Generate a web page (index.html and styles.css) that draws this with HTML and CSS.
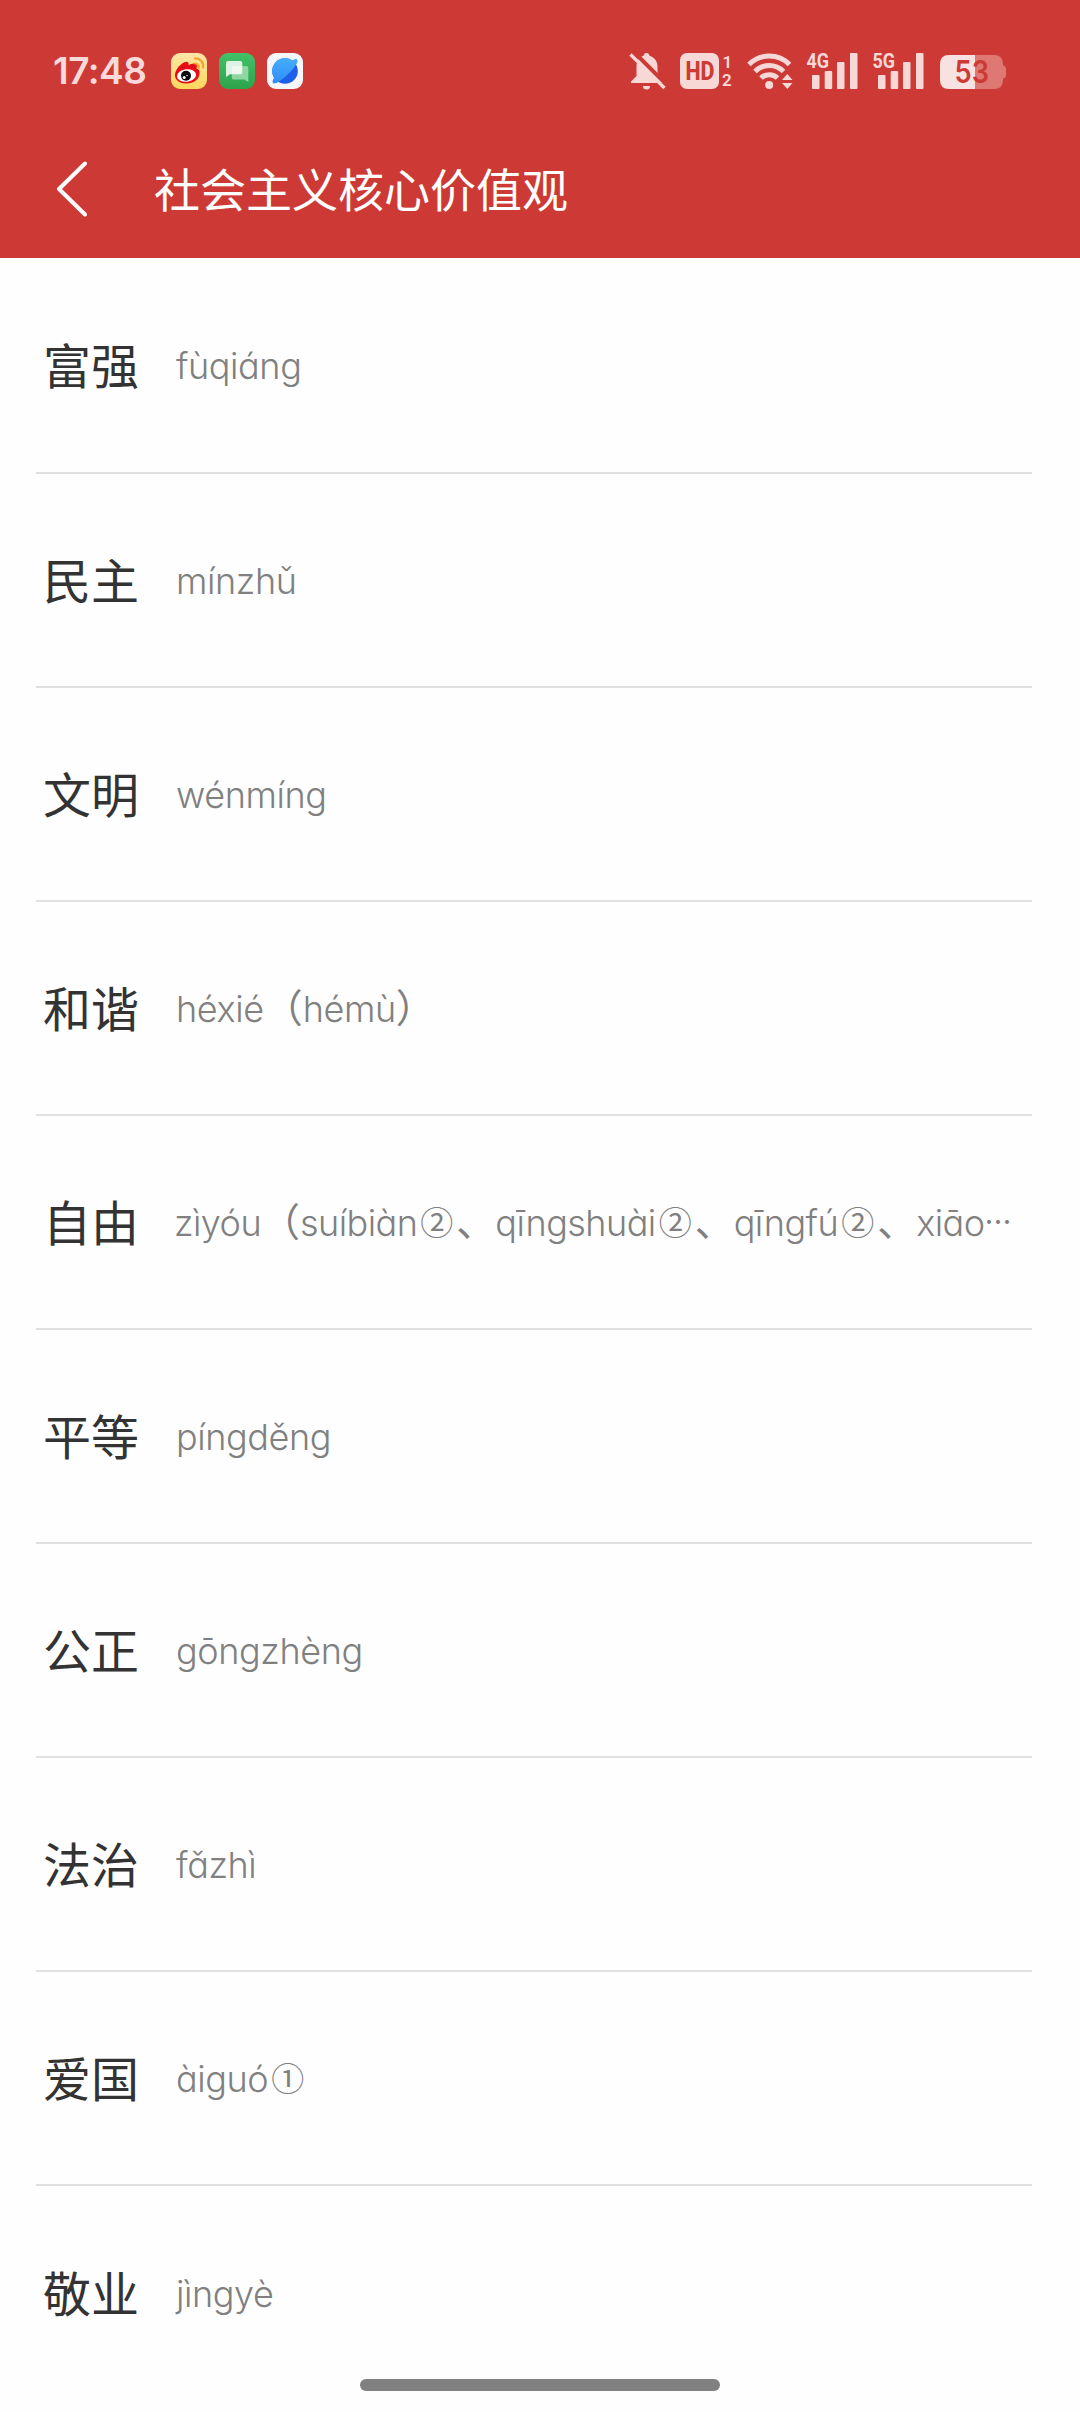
FILE: index.html
```html
<!DOCTYPE html>
<html lang="zh-CN">
  <head>
    <meta charset="UTF-8" />
    <meta name="viewport" content="width=device-width, initial-scale=1.0" />
    <title>社会主义核心价值观</title>
    <link rel="stylesheet" href="styles.css">
  </head>
  <body>
    <header class="header">
      <div class="status-bar">
        <span class="clock">17:48</span>
        <div class="apps">
          <svg class="app" viewBox="0 0 36 36">
            <defs>
              <linearGradient id="yellow" x1="0" y1="0" x2="0" y2="1">
                <stop offset="0" stop-color="#fde6a8" />
                <stop offset="1" stop-color="#fed75c" />
              </linearGradient>
            </defs>
            <rect width="36" height="36" rx="9" fill="url(#yellow)" />
            <path d="M4 23C3.500 18 8 12 13 9.500C16 8 18 9 17.500 12C20 10.500 24 9.500 25.500 11.500C26.500 13 25.500 14.500 25.500 15.500C28 16 29 18 28.500 21C28 27 21 31 15 30.500C9 30.500 4.500 27.500 4 23Z" fill="#e60d17" />
            <ellipse cx="15.500" cy="22.500" rx="9.600" ry="6.200" fill="#fff" transform="rotate(-8 15.500 22.500)" />
            <circle cx="15" cy="22.800" r="5" fill="#0b0b0b" />
            <circle cx="13.200" cy="24.400" r="1.500" fill="#fff" />
            <circle cx="16" cy="22.500" r="0.700" fill="#fff" />
            <path d="M24 5.500C29 5 33 9.500 32 14.500M24 10.500C26.500 10.500 28.200 12.500 27.600 15" fill="none" stroke="#f5a32b" stroke-width="2.200" stroke-linecap="round" />
          </svg>
          <svg class="app" viewBox="0 0 36 36">
            <defs>
              <linearGradient id="green" x1="0" y1="0" x2="0" y2="1">
                <stop offset="0" stop-color="#42c168" />
                <stop offset="1" stop-color="#2da44c" />
              </linearGradient>
            </defs>
            <rect width="36" height="36" rx="9" fill="url(#green)" />
            <path d="M14.500 13H27.500Q29.300 13 29.300 15V29L25.500 26.500H14.500Q12.800 26.500 12.800 24.500V15Q12.800 13 14.500 13Z" fill="#8fd6a3" />
            <path d="M9 8H21.500Q23.300 8 23.300 10V19.500Q23.300 21.300 21.500 21.300H11L7 24V10Q7 8 9 8Z" fill="#fff" fill-opacity="0.830" />
          </svg>
          <svg class="app" viewBox="0 0 36 36">
            <defs>
              <linearGradient id="sky" x1="0" y1="0" x2="0" y2="1">
                <stop offset="0" stop-color="#46aefc" />
                <stop offset="1" stop-color="#318cf7" />
              </linearGradient>
            </defs>
            <rect width="36" height="36" rx="9" fill="#f4f6f9" />
            <circle cx="18" cy="18" r="12.800" fill="#1f5eea" />
            <path d="M5.800 22A12.800 12.800 0 0 1 25.500 7.600C28 5.500 30.500 5.500 30.500 8C30.500 11.500 24 19 17.500 24.500C12.500 28.500 7.500 31.500 6 30C5 29 5.500 27 7 25Z" fill="url(#sky)" />
          </svg>
        </div>

        <div class="signals">
          <svg class="bell" width="38" height="40" viewBox="0 0 38 40">
            <path d="M17.500 2C19.200 2 20.300 3.200 20.500 4.800C26 6.300 28.500 11 28.500 16V24L33 30V32H2V30.500L7.500 25V16C7.500 10.500 9.500 6.300 14.500 4.800C14.800 3.200 15.800 2 17.500 2Z" fill="#f7d8d7" />
            <path d="M14 35H21A3.500 3.500 0 0 1 14 35Z" fill="#f7d8d7" />
            <path d="M4 0L38 34" stroke="#cd3a36" stroke-width="4" />
            <path d="M1.500 3.500L35.500 37" stroke="#f7d8d7" stroke-width="3.200" />
          </svg>
          <svg class="hd" width="54" height="40" viewBox="0 0 54 40">
            <rect y="2" width="39" height="36" rx="7" fill="#f7d8d7" />
            <text class="hd-text" x="5.500" y="29" textLength="29" lengthAdjust="spacingAndGlyphs">HD</text>
            <text class="sim-text" x="42.500" y="17">1</text>
            <text class="sim-text" x="42" y="35">2</text>
          </svg>
          <svg class="wifi" width="46" height="40" viewBox="0 0 46 40">
            <g fill="none" stroke="#f7d8d7" stroke-width="5">
              <path d="M2 13.500A28.500 28.500 0 0 1 42.500 13.500" />
              <path d="M8 20.500A20 20 0 0 1 36.500 20.500" />
              <path d="M14 27A11.800 11.800 0 0 1 30.500 27" />
            </g>
            <circle cx="22.200" cy="34" r="4" fill="#f7d8d7" />
            <path d="M40 21L47 30.500H33Z" fill="#cd3a36" />
            <path d="M40.300 23L45.500 29H35ZM40.300 38L45.500 32H35Z" fill="#f7d8d7" />
          </svg>
          <svg class="cell" width="52" height="48" viewBox="0 -4 52 48">
            <text class="net-text" x="0.500" y="16.500" textLength="22.500" lengthAdjust="spacingAndGlyphs">4G</text>
            <g fill="#f7d8d7">
              <rect x="6" y="24" width="7.500" height="14" rx="1" />
              <rect x="18.700" y="20" width="7.500" height="18" rx="1" />
              <rect x="31" y="11" width="7.500" height="27" rx="1" />
              <rect x="44" y="2" width="7.500" height="36" rx="1" />
            </g>
          </svg>
          <svg class="cell" width="52" height="48" viewBox="0 -4 52 48">
            <text class="net-text" x="0.500" y="16.500" textLength="22.500" lengthAdjust="spacingAndGlyphs">5G</text>
            <g fill="#f7d8d7">
              <rect x="6" y="24" width="7.500" height="14" rx="1" />
              <rect x="18.700" y="20" width="7.500" height="18" rx="1" />
              <rect x="31" y="11" width="7.500" height="27" rx="1" />
              <rect x="44" y="2" width="7.500" height="36" rx="1" />
            </g>
          </svg>
          <svg class="battery" width="66" height="40" viewBox="0 0 66 40">
            <path d="M35 4H54Q63 4 63 13V14.500Q66 15 66 18V24Q66 27 63 27.500V29Q63 38 54 38H35Z" fill="#df7773" />
            <path d="M35 4H9Q0 4 0 13V29Q0 38 9 38H35Z" fill="#f8e2e1" />
            <text class="battery-text" x="14.500" y="32.300" textLength="34.500" lengthAdjust="spacingAndGlyphs">53</text>
          </svg>
        </div>
      </div>

      <div class="title-bar">
        <svg class="back" width="32" height="56" viewBox="0 0 32 56">
          <path d="M30 2.500L4 28L30 53.500" fill="none" stroke="#fff" stroke-width="4" stroke-linecap="round" stroke-linejoin="round" />
        </svg>
        <h1 class="title">社会主义核心价值观</h1>
      </div>
    </header>

    <ul class="word-list">
      <li class="word">
        <span class="hanzi">富强</span>
        <span class="pinyin">fùqiáng</span>
      </li>
      <li class="word">
        <span class="hanzi">民主</span>
        <span class="pinyin">mínzhǔ</span>
      </li>
      <li class="word">
        <span class="hanzi">文明</span>
        <span class="pinyin">wénmíng</span>
      </li>
      <li class="word">
        <span class="hanzi">和谐</span>
        <span class="pinyin">héxié<b>（</b>hémù<b>）</b></span>
      </li>
      <li class="word">
        <span class="hanzi">自由</span>
        <span class="pinyin long">zìyóu<b>（</b>suíbiàn<b class="num">②</b><b>、</b>qīngshuài<b class="num">②</b><b>、</b>qīngfú<b class="num">②</b><b>、</b>xiāo<b class="more">…</b></span>
      </li>
      <li class="word">
        <span class="hanzi">平等</span>
        <span class="pinyin">píngděng</span>
      </li>
      <li class="word">
        <span class="hanzi">公正</span>
        <span class="pinyin">gōngzhèng</span>
      </li>
      <li class="word">
        <span class="hanzi">法治</span>
        <span class="pinyin">fǎzhì</span>
      </li>
      <li class="word">
        <span class="hanzi">爱国</span>
        <span class="pinyin">àiguó<b class="num">①</b></span>
      </li>
      <li class="word">
        <span class="hanzi">敬业</span>
        <span class="pinyin">jìngyè</span>
      </li>
    </ul>

    <div class="home-bar"></div>
  </body>
</html>
```

FILE: styles.css
```css
* {
  padding: 0;
  margin: 0;
  box-sizing: border-box;
}

body {
  width: 1080px;
  height: 2412px;
  overflow: hidden;
  background: #fefefe;
  font-family: "Noto Sans CJK SC", sans-serif;
}

svg {
  display: block;
  flex: none;
}

.header {
  height: 258px;
  background: #cd3a36;
}

/* status bar */

.status-bar {
  display: flex;
  align-items: center;
  height: 142px;
  padding: 0 74px 0 53px;
}

.clock {
  width: 118px;
  font: 600 37px/40px Inter, sans-serif;
  letter-spacing: -0.5px;
  color: #f9d9da;
}

.apps {
  display: flex;
  gap: 12px;
}

.app {
  width: 36px;
  height: 36px;
}

.signals {
  display: flex;
  align-items: center;
  margin-left: auto;
}

.hd {
  margin-left: 13px;
}

.wifi {
  margin-left: 13px;
}

.cell {
  margin-left: 13px;
  overflow: visible;
}

.cell + .cell {
  margin-left: 14px;
}

.battery {
  margin-left: 16px;
}

.hd-text {
  font: 800 26px Roboto, sans-serif;
  fill: #cd3a36;
}

.sim-text {
  font: 600 17px Roboto, sans-serif;
  fill: #f7d8d7;
}

.net-text {
  font: 700 21px Roboto, sans-serif;
  fill: #f7d8d7;
}

.battery-text {
  font: 600 31px Inter, sans-serif;
  fill: #cd3a36;
}

/* title bar */

.title-bar {
  display: flex;
  align-items: center;
  gap: 67px;
  height: 94px;
  padding-left: 55px;
}

.title {
  padding-bottom: 5px;
  font-size: 46px;
  font-weight: 400;
  line-height: 60px;
  color: #fff;
}

/* words */

.word-list {
  width: 996px;
  margin-left: 36px;
  list-style: none;
}

.word {
  display: flex;
  align-items: center;
  height: 214px;
  padding-left: 7px;
  border-bottom: 2px solid #e0e0e0;
  white-space: nowrap;
}

.word:first-child {
  height: 216px;
}

.word:last-child {
  border-bottom: 0;
}

.hanzi {
  width: 133px;
  padding-bottom: 5px;
  font-size: 48px;
  line-height: 60px;
  color: #333;
}

.pinyin {
  padding-top: 2px;
  font-family: Inter, sans-serif;
  font-size: 36px;
  font-weight: 300;
  line-height: 60px;
  letter-spacing: -0.4px;
  font-feature-settings: "cv11";
  color: #808080;
}

.pinyin.long {
  margin-left: -2px;
  letter-spacing: -0.55px;
}

.pinyin b {
  font-family: "Noto Sans CJK SC", sans-serif;
  font-size: 39px;
  font-weight: 400;
  line-height: 1;
  letter-spacing: 0;
}

.pinyin .num {
  padding: 0 3px;
  font-size: 33px;
  vertical-align: 1px;
}

.pinyin .more {
  font-size: 27px;
  font-weight: 500;
  vertical-align: 4px;
}

.home-bar {
  position: absolute;
  left: 360px;
  top: 2379px;
  width: 360px;
  height: 12px;
  border-radius: 6px;
  background: #808080;
}
```
